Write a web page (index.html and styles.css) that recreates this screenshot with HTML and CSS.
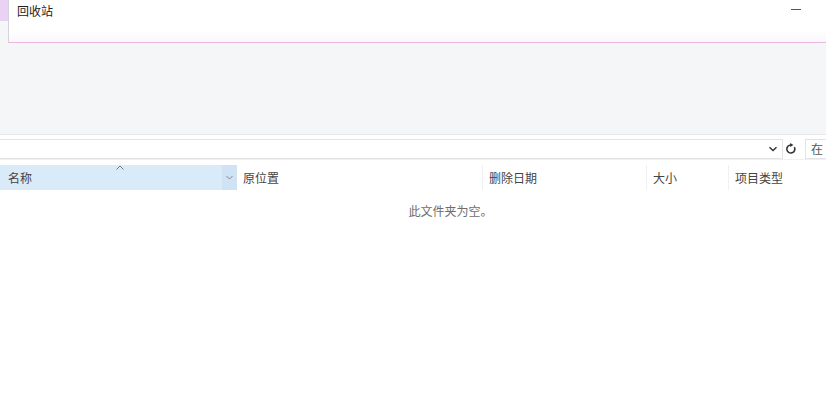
FILE: index.html
```html
<!DOCTYPE html>
<html lang="zh-CN">
<head>
  <meta charset="UTF-8">
  <title>回收站</title>
  <link rel="stylesheet" href="styles.css">
</head>
<body>
  <div class="window">
    <div class="titlebar">
      <div class="tab-edge"></div>
      <div class="tab">
        <span class="title">回收站</span>
        <span class="minimize"></span>
      </div>
    </div>

    <div class="ribbon"></div>

    <div class="address-row">
      <div class="address">
        <svg class="chev" width="10" height="10" viewBox="0 0 10 10"><path d="M1.5 3.2 L5 6.6 L8.5 3.2" fill="none" stroke="#333" stroke-width="1.4"/></svg>
      </div>
      <div class="refresh">
        <svg width="12" height="12" viewBox="0 0 12 12"><path d="M9.4 4.2 A4 4 0 1 1 6 2" fill="none" stroke="#333" stroke-width="1.6"/><path d="M5.2 0 L8.4 2 L5.2 4 Z" fill="#333"/></svg>
      </div>
      <div class="search">在</div>
    </div>

    <div class="header">
      <div class="col col-name">
        <span>名称</span>
        <span class="caret">
          <svg width="8" height="5" viewBox="0 0 8 5"><path d="M0.5 4.5 L4 1 L7.5 4.5" fill="none" stroke="#777" stroke-width="1"/></svg>
        </span>
        <span class="drop">
          <svg width="7" height="5" viewBox="0 0 7 5"><path d="M0.5 1 L3.5 4 L6.5 1" fill="none" stroke="#888" stroke-width="1"/></svg>
        </span>
      </div>
      <div class="col col-orig">原位置</div>
      <div class="col col-date">删除日期</div>
      <div class="col col-size">大小</div>
      <div class="col col-type">项目类型</div>
    </div>

    <div class="empty">此文件夹为空。</div>
  </div>
</body>
</html>
```

FILE: styles.css
```css
body {
  margin: 0;
  font-family: "Noto Sans CJK SC", "Noto Sans", sans-serif;
  font-size: 12px;
  color: #333;
  background-color: #fff;
  width: 826px;
  height: 400px;
  overflow: hidden;
}

.titlebar {
  display: flex;
  height: 44px;
  background-color: #f5f6f8;
}

.tab-edge {
  width: 8px;
  height: 21px;
  background-color: #e9d2f4;
}

.tab {
  flex: 1;
  position: relative;
  height: 43px;
  background: linear-gradient(#fff 70%, #fbf7fc);
  border-left: 1px solid #d8d2dc;
  border-bottom: 1px solid #e8b9e0;
  box-sizing: border-box;
  padding-left: 8px;
}

.title {
  display: block;
  line-height: 22px;
  color: #222;
}

.minimize {
  position: absolute;
  top: 9px;
  left: 782px;
  width: 10px;
  height: 1px;
  background-color: #555;
}

.ribbon {
  height: 90px;
  background-color: #f5f6f8;
  border-bottom: 1px solid #e6e7ea;
}

.address-row {
  display: flex;
  align-items: center;
  height: 20px;
  padding-top: 4px;
  border-bottom: 1px solid #f0f0f0;
}

.address {
  display: flex;
  justify-content: flex-end;
  align-items: center;
  width: 783px;
  height: 20px;
  border: 1px solid #e3e3e3;
  border-left: none;
  box-sizing: border-box;
  padding-right: 4px;
}

.refresh {
  display: flex;
  align-items: center;
  justify-content: center;
  width: 16px;
  height: 20px;
}

.search {
  margin-left: 6px;
  flex: 1;
  height: 20px;
  line-height: 18px;
  border: 1px solid #e3e3e3;
  border-right: none;
  box-sizing: border-box;
  padding-left: 5px;
  color: #555;
}

.header {
  display: flex;
  height: 25px;
  margin-top: 5px;
}

.col {
  display: flex;
  align-items: center;
  padding-left: 6px;
  box-sizing: border-box;
  border-right: 1px solid #f0f0f0;
  color: #444;
}

.col-name {
  position: relative;
  width: 237px;
  padding-left: 8px;
  background-color: #d9eaf8;
  border-right: none;
}

.caret {
  position: absolute;
  left: 116px;
  top: 0;
  line-height: 0;
}

.drop {
  position: absolute;
  right: 0;
  top: 0;
  width: 15px;
  height: 25px;
  display: flex;
  align-items: center;
  justify-content: center;
  background-color: #cfe3f5;
}

.col-orig {
  width: 246px;
}

.col-date {
  width: 164px;
}

.col-size {
  width: 82px;
}

.col-type {
  flex: 1;
  border-right: none;
}

.empty {
  text-align: center;
  margin-top: 12px;
  padding-left: 75px;
  color: #6d6d6d;
}
```
